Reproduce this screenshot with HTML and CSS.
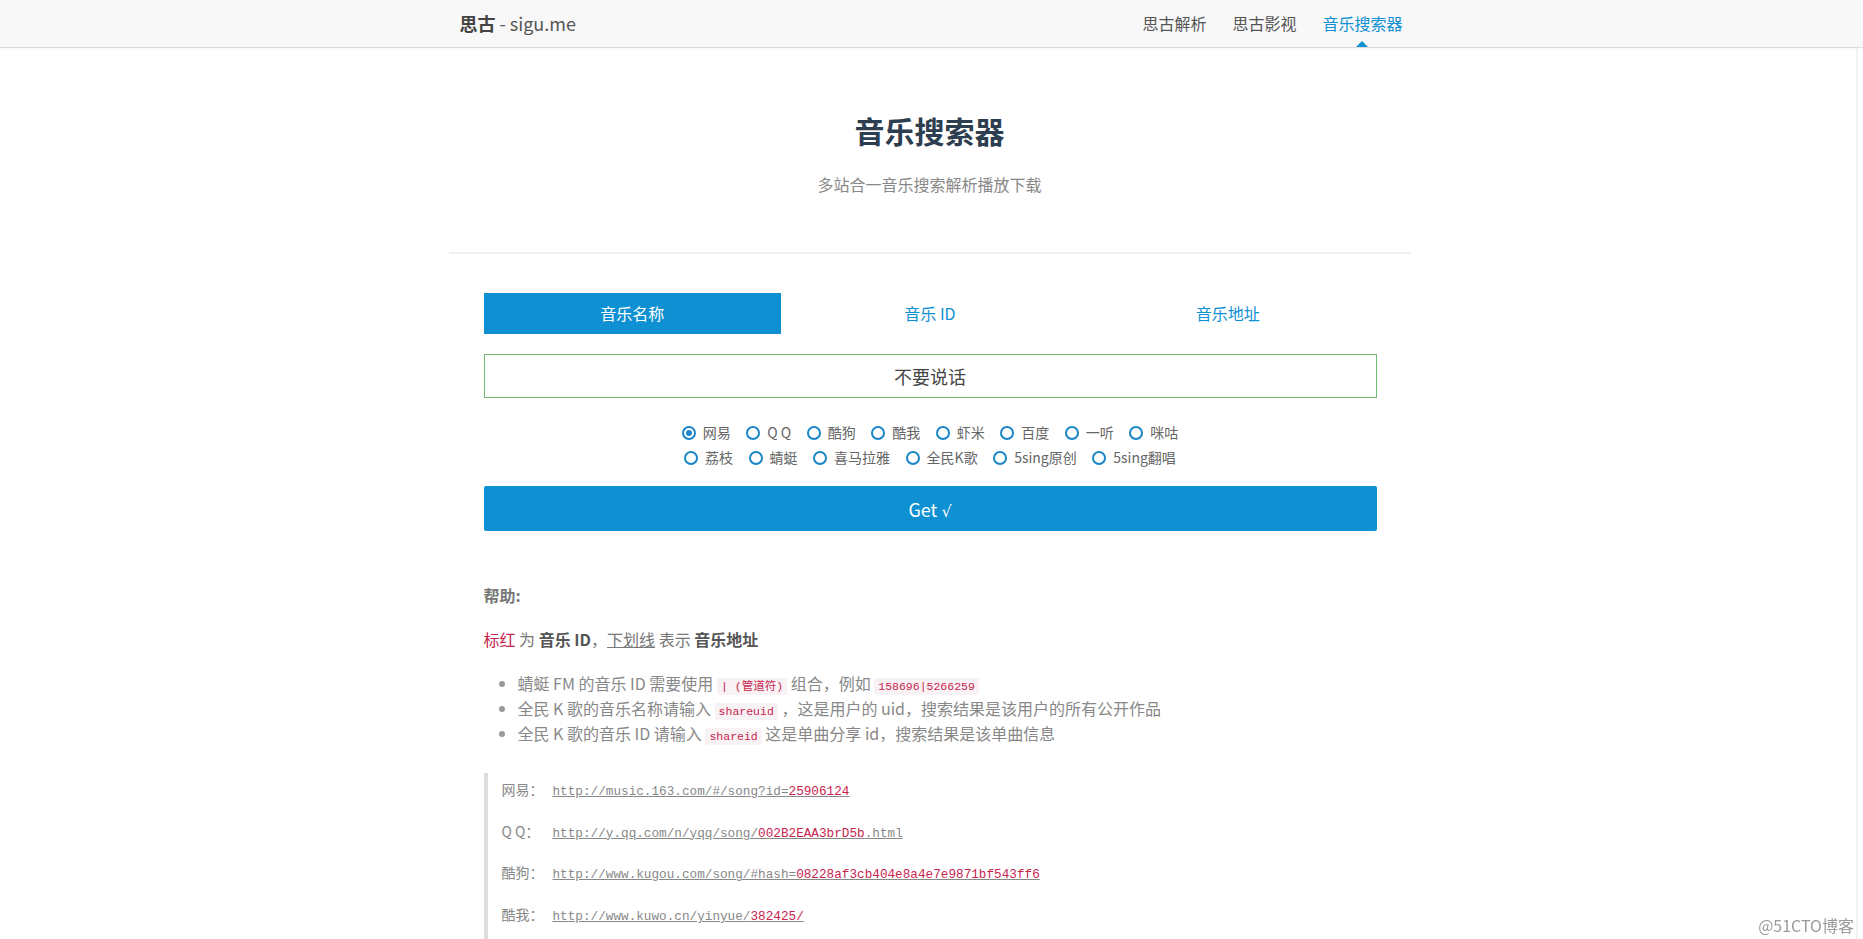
FILE: index.html
```html
<!DOCTYPE html>
<html lang="zh-CN">
<head>
<meta charset="utf-8">
<title>音乐搜索器</title>
<link rel="stylesheet" href="styles.css">
</head>
<body>
<header class="topbar">
  <div class="topbar-inner">
    <a class="brand"><strong>思古</strong> - sigu.me</a>
    <nav class="nav">
      <a class="nav-item">思古解析</a>
      <a class="nav-item">思古影视</a>
      <a class="nav-item active">音乐搜索器</a>
    </nav>
  </div>
</header>
<main class="container">
  <section class="hero">
    <h1 class="title">音乐搜索器</h1>
    <p class="subtitle">多站合一音乐搜索解析播放下载</p>
  </section>
  <hr class="divider">
  <div class="form-area">
    <div class="tabs">
      <div class="tab active">音乐名称</div>
      <div class="tab">音乐 ID</div>
      <div class="tab">音乐地址</div>
    </div>
    <input class="search-input" type="text" value="不要说话">
    <div class="radios">
      <div class="radio-row">
        <label class="radio checked"><span class="ring"></span>网易</label>
        <label class="radio"><span class="ring"></span>Q Q</label>
        <label class="radio"><span class="ring"></span>酷狗</label>
        <label class="radio"><span class="ring"></span>酷我</label>
        <label class="radio"><span class="ring"></span>虾米</label>
        <label class="radio"><span class="ring"></span>百度</label>
        <label class="radio"><span class="ring"></span>一听</label>
        <label class="radio"><span class="ring"></span>咪咕</label>
      </div>
      <div class="radio-row">
        <label class="radio"><span class="ring"></span>荔枝</label>
        <label class="radio"><span class="ring"></span>蜻蜓</label>
        <label class="radio"><span class="ring"></span>喜马拉雅</label>
        <label class="radio"><span class="ring"></span>全民K歌</label>
        <label class="radio"><span class="ring"></span>5sing原创</label>
        <label class="radio"><span class="ring"></span>5sing翻唱</label>
      </div>
    </div>
    <button class="get-btn" type="button">Get <span class="check">√</span></button>

    <div class="help">
      <p class="help-title">帮助:</p>
      <p class="help-legend"><span class="red">标红</span> 为 <strong>音乐 ID</strong>，<u>下划线</u> 表示 <strong>音乐地址</strong></p>
      <ul class="help-list">
        <li>蜻蜓 FM 的音乐 ID 需要使用 <code>| (管道符)</code> 组合，例如 <code>158696|5266259</code></li>
        <li>全民 K 歌的音乐名称请输入 <code>shareuid</code> ，这是用户的 uid，搜索结果是该用户的所有公开作品</li>
        <li>全民 K 歌的音乐 ID 请输入 <code>shareid</code> 这是单曲分享 id，搜索结果是该单曲信息</li>
      </ul>
      <blockquote class="examples">
        <p><span class="label">网易：</span><span class="url">http://music.163.com/#/song?id=<span class="red">25906124</span></span></p>
        <p><span class="label">Q Q：</span><span class="url">http://y.qq.com/n/yqq/song/<span class="red">002B2EAA3brD5b</span>.html</span></p>
        <p><span class="label">酷狗：</span><span class="url">http://www.kugou.com/song/#hash=<span class="red">08228af3cb404e8a4e7e9871bf543ff6</span></span></p>
        <p><span class="label">酷我：</span><span class="url">http://www.kuwo.cn/yinyue/<span class="red">382425/</span></span></p>
      </blockquote>
    </div>
  </div>
</main>
<div class="edge"></div>
<div class="watermark">@51CTO博客</div>
</body>
</html>
```

FILE: styles.css
```css
* { box-sizing: border-box; }
html, body { margin: 0; padding: 0; }
body {
  font-family: "Noto Sans CJK SC", "Noto Sans", sans-serif;
  background: #fff;
  color: #333;
}

/* top bar */
.topbar {
  height: 48px;
  background: #f8f8f8;
  border-bottom: 1px solid #dcdcdc;
  box-shadow: 0 1px 2px rgba(0,0,0,0.04);
}
.topbar-inner {
  width: 962px;
  margin-left: calc(50% - 483px);
  height: 47px;
  display: flex;
  align-items: center;
  justify-content: space-between;
  padding: 0 8px 0 11px;
}
.brand {
  font-size: 18px;
  color: #555;
  line-height: 47px;
}
.brand strong { color: #444; font-weight: 700; }
.nav {
  display: flex;
  gap: 26px;
  height: 47px;
}
.nav-item {
  position: relative;
  font-size: 16px;
  line-height: 47px;
  color: #555;
}
.nav-item.active { color: #0e90d2; }
.nav-item.active::after {
  content: "";
  position: absolute;
  left: 50%;
  bottom: 0;
  margin-left: -6px;
  border-left: 6px solid transparent;
  border-right: 6px solid transparent;
  border-bottom: 6px solid #0e90d2;
}

/* main */
.container {
  width: 962px;
  margin-left: calc(50% - 483px);
}
.hero { text-align: center; padding-top: 64px; }
.title {
  margin: 0;
  font-size: 30px;
  line-height: 36px;
  font-weight: 700;
  color: #2c3e50;
}
.subtitle {
  margin: 24px 0 0;
  font-size: 16px;
  line-height: 24px;
  color: #888;
}
.divider {
  margin: 56px 0 0;
  border: 0;
  border-top: 2px solid #f0f0f0;
  height: 0;
}
.form-area {
  padding: 39px 34px 0 35px;
}
.tabs {
  display: grid;
  grid-template-columns: repeat(3, 1fr);
}
.tab {
  height: 41px;
  line-height: 41px;
  text-align: center;
  font-size: 16px;
  color: #0e90d2;
}
.tab.active { background: #0e90d2; color: #fff; }

.search-input {
  display: block;
  width: 100%;
  height: 44px;
  margin-top: 20px;
  border: 1px solid #72bb72;
  border-radius: 0;
  font-family: inherit;
  font-size: 18px;
  color: #444;
  text-align: center;
  padding: 0 10px;
  outline: none;
}

.radios { margin-top: 22px; }
.radio-row {
  display: flex;
  justify-content: center;
  gap: 15.5px;
  height: 25px;
}
.radio {
  display: inline-flex;
  align-items: center;
  gap: 7px;
  font-size: 14px;
  line-height: 25px;
  color: #666;
}
.ring {
  position: relative;
  width: 14px;
  height: 14px;
  border: 2px solid #1a86c7;
  border-radius: 50%;
}
.radio.checked .ring::after {
  content: "";
  position: absolute;
  left: 2px;
  top: 2px;
  width: 6px;
  height: 6px;
  border-radius: 50%;
  background: #1a86c7;
}

.get-btn {
  display: block;
  width: 100%;
  height: 45px;
  margin-top: 16px;
  border: 0;
  border-radius: 2px;
  background: #0e90d2;
  color: #fff;
  font-family: inherit;
  font-size: 18px;
}
.check { font-family: "DejaVu Sans", sans-serif; font-size: 16px; }

/* help */
.help {
  padding-top: 52px;
  font-size: 16px;
  line-height: 25.6px;
  color: #888;
}
.help p { margin: 0; }
.help-title { font-weight: 700; color: #777; }
.help .help-legend { margin-top: 18px; color: #777; }
.help-legend strong { color: #555; }
.help-legend u { color: #777; }
.red { color: #c7254e; }
.help-list {
  margin: 19px 0 0;
  padding-left: 34px;
}
.help-list li { height: 25px; line-height: 25px; }
.help-list li::marker { color: #999; }
code {
  font-family: "Liberation Mono", "Noto Sans CJK SC", monospace;
  font-size: 11.5px;
  line-height: 1;
  color: #c7254e;
  background: #f9f2f4;
  padding: 2px 4px;
  border-radius: 2px;
}
.examples {
  margin: 27px 0 0;
  padding: 3px 0 24px 14px;
  border-left: 4px solid #ddd;
}
.help .examples p {
  margin: 0 0 16px;
  height: 25.6px;
}
.label {
  display: inline-block;
  width: 51px;
  font-size: 14px;
  line-height: 1;
  color: #888;
}
.url {
  font-family: "Liberation Mono", monospace;
  font-size: 12.7px;
  line-height: 1;
  color: #888;
  text-decoration: underline;
}

.edge {
  position: fixed;
  top: 48px;
  bottom: 0;
  right: 5px;
  width: 2px;
  background: #f2f2f2;
}
.watermark {
  position: fixed;
  right: 9px;
  bottom: 4px;
  font-size: 16px;
  line-height: 20px;
  color: #9a9a9a;
  font-family: "Noto Sans CJK SC", sans-serif;
}
```
